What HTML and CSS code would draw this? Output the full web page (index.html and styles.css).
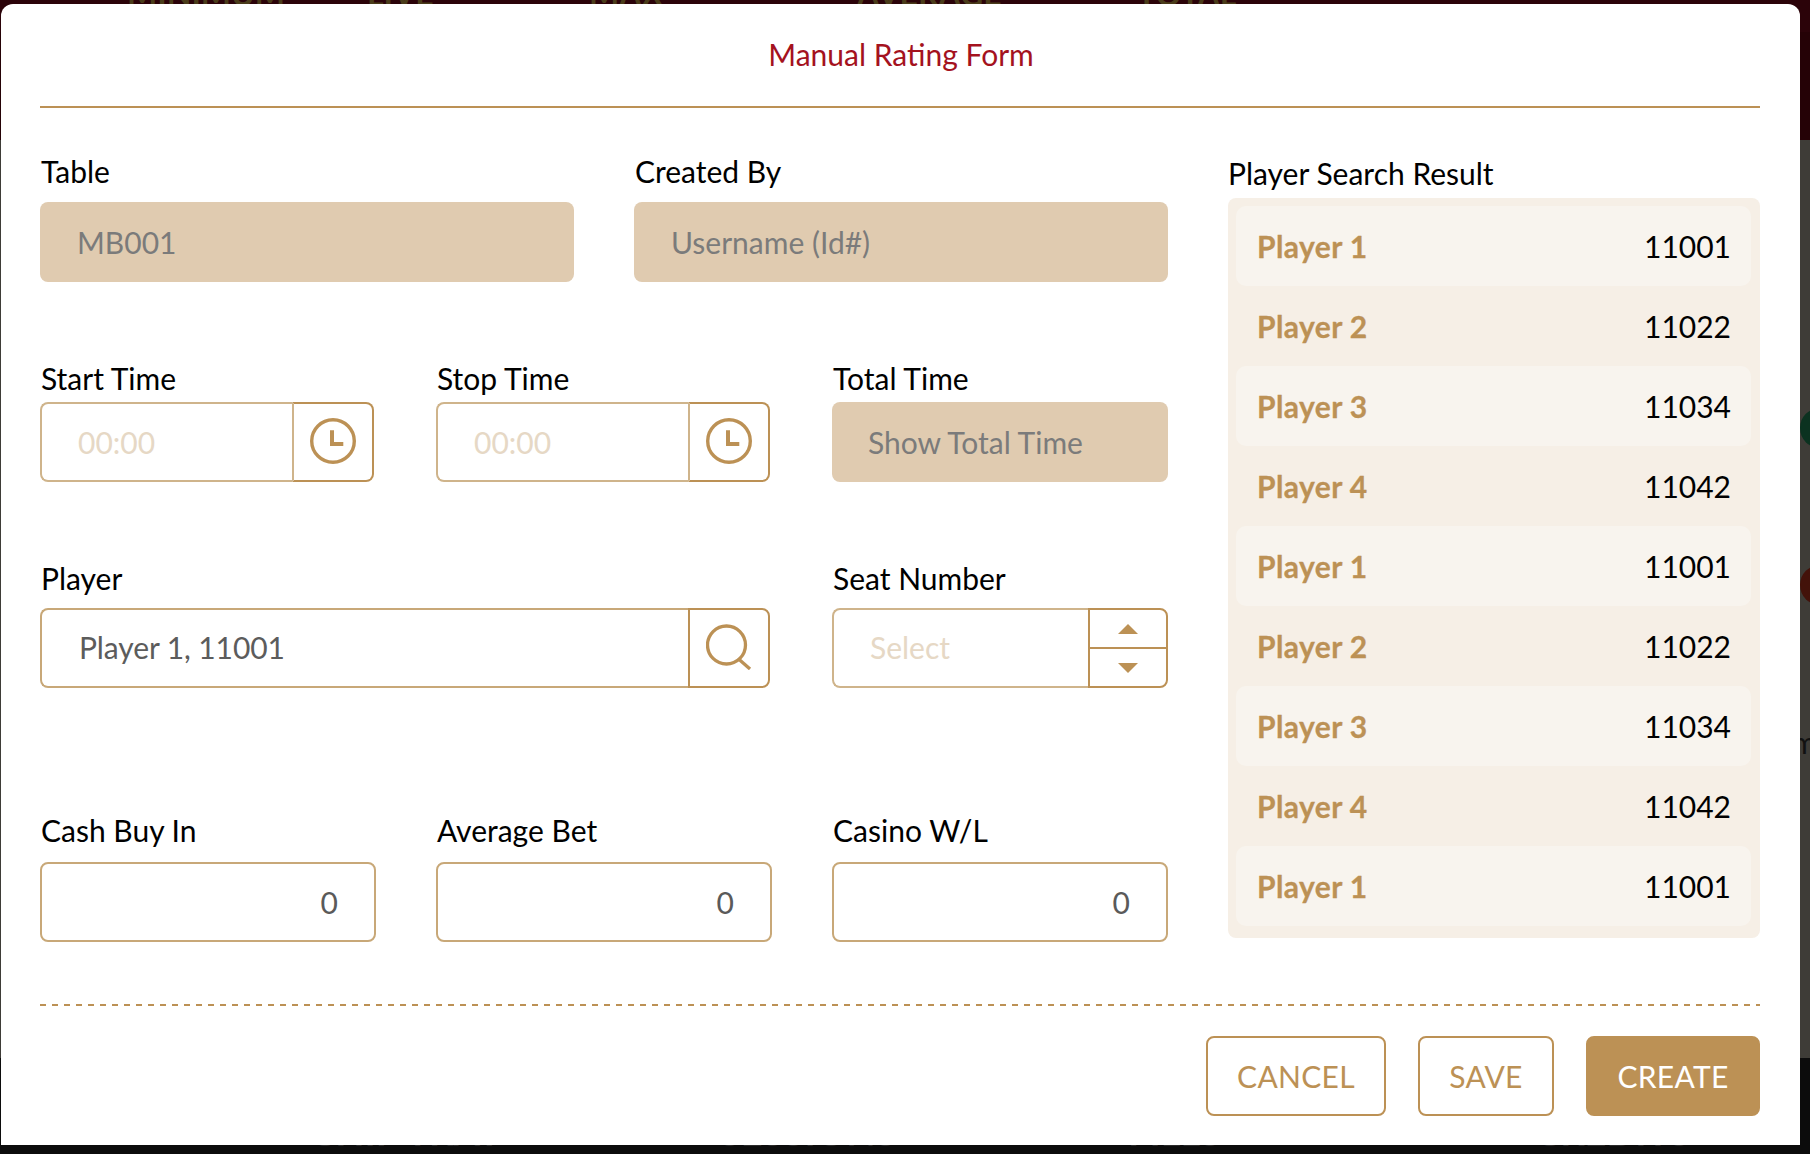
FILE: index.html
```html
<!DOCTYPE html>
<html lang="en">
<head>
<meta charset="utf-8">
<title>Manual Rating Form</title>
<link rel="stylesheet" href="styles.css">
</head>
<body>
<div class="backdrop">
  <div class="bg-top">
    <div class="bg-top-words">
      <span class="w1">MINIMUM</span><span class="w2">LIVE</span><span class="w3">MAX</span><span class="w4">AVERAGE</span><span class="w5">TOTAL</span>
    </div>
  </div>
  <div class="bg-mid">
    <span class="dot dot-green"></span>
    <span class="dot dot-red"></span>
    <span class="bg-glyph">m</span>
  </div>
  <div class="bg-bottom">
    <span class="b1">CHIP TRAY</span><span class="b2">SESSIONS</span><span class="b3">FILLS</span><span class="b4">CREDITS</span>
  </div>
</div>

<main class="modal">
  <h1 class="title">Manual Rating Form</h1>
  <div class="content">
    <div class="form">
      <div class="row row-a">
        <div class="field w-half">
          <label class="label">Table</label>
          <div class="box box-filled">MB001</div>
        </div>
        <div class="field w-half">
          <label class="label">Created By</label>
          <div class="box box-filled">Username (Id#)</div>
        </div>
      </div>

      <div class="row row-b">
        <div class="field w-time">
          <label class="label">Start Time</label>
          <div class="box box-group">
            <span class="group-text placeholder">00:00</span>
            <span class="addon addon-light">
              <svg class="icon" viewBox="0 0 46 46" aria-hidden="true"><circle cx="23" cy="23" r="21.3" fill="none" stroke="#bc9155" stroke-width="3.4"/><path d="M22 12.3V26h11.3" fill="none" stroke="#bc9155" stroke-width="4"/></svg>
            </span>
          </div>
        </div>
        <div class="field w-time">
          <label class="label">Stop Time</label>
          <div class="box box-group">
            <span class="group-text placeholder">00:00</span>
            <span class="addon addon-light">
              <svg class="icon" viewBox="0 0 46 46" aria-hidden="true"><circle cx="23" cy="23" r="21.3" fill="none" stroke="#bc9155" stroke-width="3.4"/><path d="M22 12.3V26h11.3" fill="none" stroke="#bc9155" stroke-width="4"/></svg>
            </span>
          </div>
        </div>
        <div class="field w-wide">
          <label class="label">Total Time</label>
          <div class="box box-filled box-total">Show Total Time</div>
        </div>
      </div>

      <div class="row row-c">
        <div class="field w-player">
          <label class="label">Player</label>
          <div class="box box-group">
            <span class="group-text value">Player 1, 11001</span>
            <span class="addon">
              <svg class="icon" viewBox="0 0 46 46" aria-hidden="true"><circle cx="20.5" cy="21" r="19" fill="none" stroke="#bc9155" stroke-width="3.3"/><path d="M32 34.5L44 45" fill="none" stroke="#bc9155" stroke-width="3.3"/></svg>
            </span>
          </div>
        </div>
        <div class="field w-wide">
          <label class="label">Seat Number</label>
          <div class="box box-group">
            <span class="group-text placeholder">Select</span>
            <span class="stepper">
              <span class="step"><svg class="tri" viewBox="0 0 20 10" aria-hidden="true"><path d="M10 0l10 10H0z" fill="#bc9155"/></svg></span>
              <span class="step"><svg class="tri" viewBox="0 0 20 10" aria-hidden="true"><path d="M0 0h20L10 10z" fill="#bc9155"/></svg></span>
            </span>
          </div>
        </div>
      </div>

      <div class="row row-d">
        <div class="field w-wide">
          <label class="label">Cash Buy In</label>
          <div class="box box-num">0</div>
        </div>
        <div class="field w-wide">
          <label class="label">Average Bet</label>
          <div class="box box-num">0</div>
        </div>
        <div class="field w-wide">
          <label class="label">Casino W/L</label>
          <div class="box box-num">0</div>
        </div>
      </div>
    </div>

    <aside class="results">
      <div class="label results-label">Player Search Result</div>
      <ul class="list">
        <li class="item"><span class="pname">Player 1</span><span class="pid">11001</span></li>
        <li class="item"><span class="pname">Player 2</span><span class="pid">11022</span></li>
        <li class="item"><span class="pname">Player 3</span><span class="pid">11034</span></li>
        <li class="item"><span class="pname">Player 4</span><span class="pid">11042</span></li>
        <li class="item"><span class="pname">Player 1</span><span class="pid">11001</span></li>
        <li class="item"><span class="pname">Player 2</span><span class="pid">11022</span></li>
        <li class="item"><span class="pname">Player 3</span><span class="pid">11034</span></li>
        <li class="item"><span class="pname">Player 4</span><span class="pid">11042</span></li>
        <li class="item"><span class="pname">Player 1</span><span class="pid">11001</span></li>
      </ul>
    </aside>
  </div>

  <footer class="actions">
    <button class="btn btn-cancel" type="button">CANCEL</button>
    <button class="btn btn-save" type="button">SAVE</button>
    <button class="btn btn-create" type="button">CREATE</button>
  </footer>
</main>
</body>
</html>
```

FILE: styles.css
```css
* { box-sizing: border-box; }
html, body { margin: 0; padding: 0; height: 100%; }
body {
  width: 1810px;
  height: 1154px;
  overflow: hidden;
  position: relative;
  font-family: "Lato", sans-serif;
  background: #0c0c0c;
}

/* dimmed page behind the dialog */
.backdrop { height: 1154px; display: flex; flex-direction: column; overflow: hidden; }
.bg-top {
  height: 145px;
  background: linear-gradient(#2b0309 32px, #250206 32px);
  overflow: hidden;
}
.bg-top-words {
  display: flex;
  margin-top: -26px;
  padding-left: 127px;
  height: 40px;
  font-size: 32px;
  line-height: 40px;
  font-weight: 700;
  color: #4a3c1a;
  white-space: nowrap;
}
.w1 { width: 240px; }
.w2 { width: 222px; }
.w3 { width: 268px; }
.w4 { width: 280px; }
.bg-mid { height: 947px; background: #3e3c37; position: relative; }
.dot { position: absolute; left: 1800px; width: 40px; height: 40px; border-radius: 50%; }
.dot-green { top: 268px; background: #0b3220; }
.dot-red { top: 425px; background: #43120a; }
.bg-glyph { position: absolute; left: 1792px; top: 587px; font-size: 30px; line-height: 30px; color: #111; }
.bg-bottom {
  flex: 1;
  padding-top: 50px;
  padding-left: 310px;
  display: flex;
  font-size: 38px;
  line-height: 46px;
  font-weight: 700;
  color: #2b2b2b;
  white-space: nowrap;
}
.b1 { width: 410px; }
.b2 { width: 408px; }
.b3 { width: 407px; }

/* dialog */
.modal {
  position: absolute;
  left: 1px;
  top: 4px;
  width: 1799px;
  height: 1141px;
  background: #fff;
  border-radius: 12px 12px 0 0;
  padding: 0 40px 0 39px;
  display: flex;
  flex-direction: column;
}
.title {
  margin: 0;
  height: 104px;
  padding-left: 2px;
  border-bottom: 2px solid #bc9155;
  text-align: center;
  font-size: 30px;
  font-weight: 400;
  line-height: 100px;
  color: #a4121e;
}
.content {
  display: flex;
  justify-content: space-between;
  height: 898px;
  background: linear-gradient(to right, #bc9155 50%, transparent 50%) left bottom / 12px 2px repeat-x;
}
.form { width: 1128px; display: flex; flex-direction: column; }
.row { display: flex; justify-content: space-between; }
.row-a { margin-top: 45px; }
.row-b { margin-top: 78px; }
.row-c { margin-top: 78px; }
.row-d { margin-top: 124px; }

.field { display: flex; flex-direction: column; }
.w-half { width: 534px; }
.w-time { width: 334px; }
.w-wide { width: 336px; }
.w-player { width: 730px; }

.label {
  display: block;
  height: 40px;
  padding-left: 1px;
  font-size: 30px;
  line-height: 37px;
  color: #000;
}
.row-a .label { margin-bottom: 9px; }
.row-b .label { margin-bottom: 2px; }
.row-c .label { margin-bottom: 8px; }
.row-d .label { margin-bottom: 10px; }

.box {
  height: 80px;
  border-radius: 8px;
  font-size: 30px;
  line-height: 80px;
  display: flex;
}
.box-filled { background: #e0cbb0; color: #7b7b7b; padding-left: 37px; }
.box-total { padding-left: 36px; }
.box-group { line-height: 76px; }
.row-c .box-group { line-height: 74px; }
.group-text {
  flex: 1;
  min-width: 0;
  padding-left: 36px;
  border: 2px solid #cfb48b;
  border-right: 0;
  border-radius: 8px 0 0 8px;
}
.placeholder { color: #e6d8c5; }
.value { color: #5c5c5c; padding-left: 37px; letter-spacing: -0.1px; border-color: #c8a878; }
.addon {
  width: 82px;
  flex: none;
  border: 2px solid #bc9155;
  border-radius: 0 8px 8px 0;
  display: flex;
  align-items: center;
  justify-content: center;
}
.addon-light { border-left-color: #cfb48b; }
.icon { width: 46px; height: 46px; display: block; margin-top: -2px; }
.stepper {
  width: 80px;
  flex: none;
  border: 2px solid #bc9155;
  border-radius: 0 8px 8px 0;
  display: flex;
  flex-direction: column;
}
.step { flex: 1; display: flex; align-items: center; justify-content: center; }
.step + .step { border-top: 2px solid #bc9155; }
.tri { width: 20px; height: 10px; display: block; }
.box-num {
  border: 2px solid #c8a878;
  color: #5a5a5a;
  justify-content: flex-end;
  padding-right: 36px;
  line-height: 76px;
}

/* results */
.results { width: 532px; padding-top: 46px; }
.label.results-label { height: 44px; line-height: 39px; padding-left: 0; }
.list {
  list-style: none;
  margin: 0;
  padding: 8px 9px 12px 8px;
  background: #f6efe6;
  border-radius: 8px;
}
.item {
  height: 80px;
  padding: 0 20px 0 21px;
  display: flex;
  align-items: center;
  justify-content: space-between;
  border-radius: 10px;
  font-size: 30px;
}
.item:nth-child(odd) { background: #f8f4ee; }
.pname { font-weight: 700; color: #bc9155; letter-spacing: 0.4px; -webkit-text-stroke: 0.3px #bc9155; }
.pid { color: #000; }

/* footer */
.actions {
  display: flex;
  justify-content: flex-end;
  gap: 32px;
  padding-top: 30px;
}
.btn {
  height: 80px;
  border-radius: 8px;
  font-family: "Lato", sans-serif;
  font-size: 30px;
  letter-spacing: 0.3px;
  padding: 0;
  border: 2px solid #bc9155;
  background: #fff;
  color: #bc9155;
}
.btn-cancel { width: 180px; }
.btn-save { width: 136px; }
.btn-create { width: 174px; background: #bc9155; color: #fff; }
```
